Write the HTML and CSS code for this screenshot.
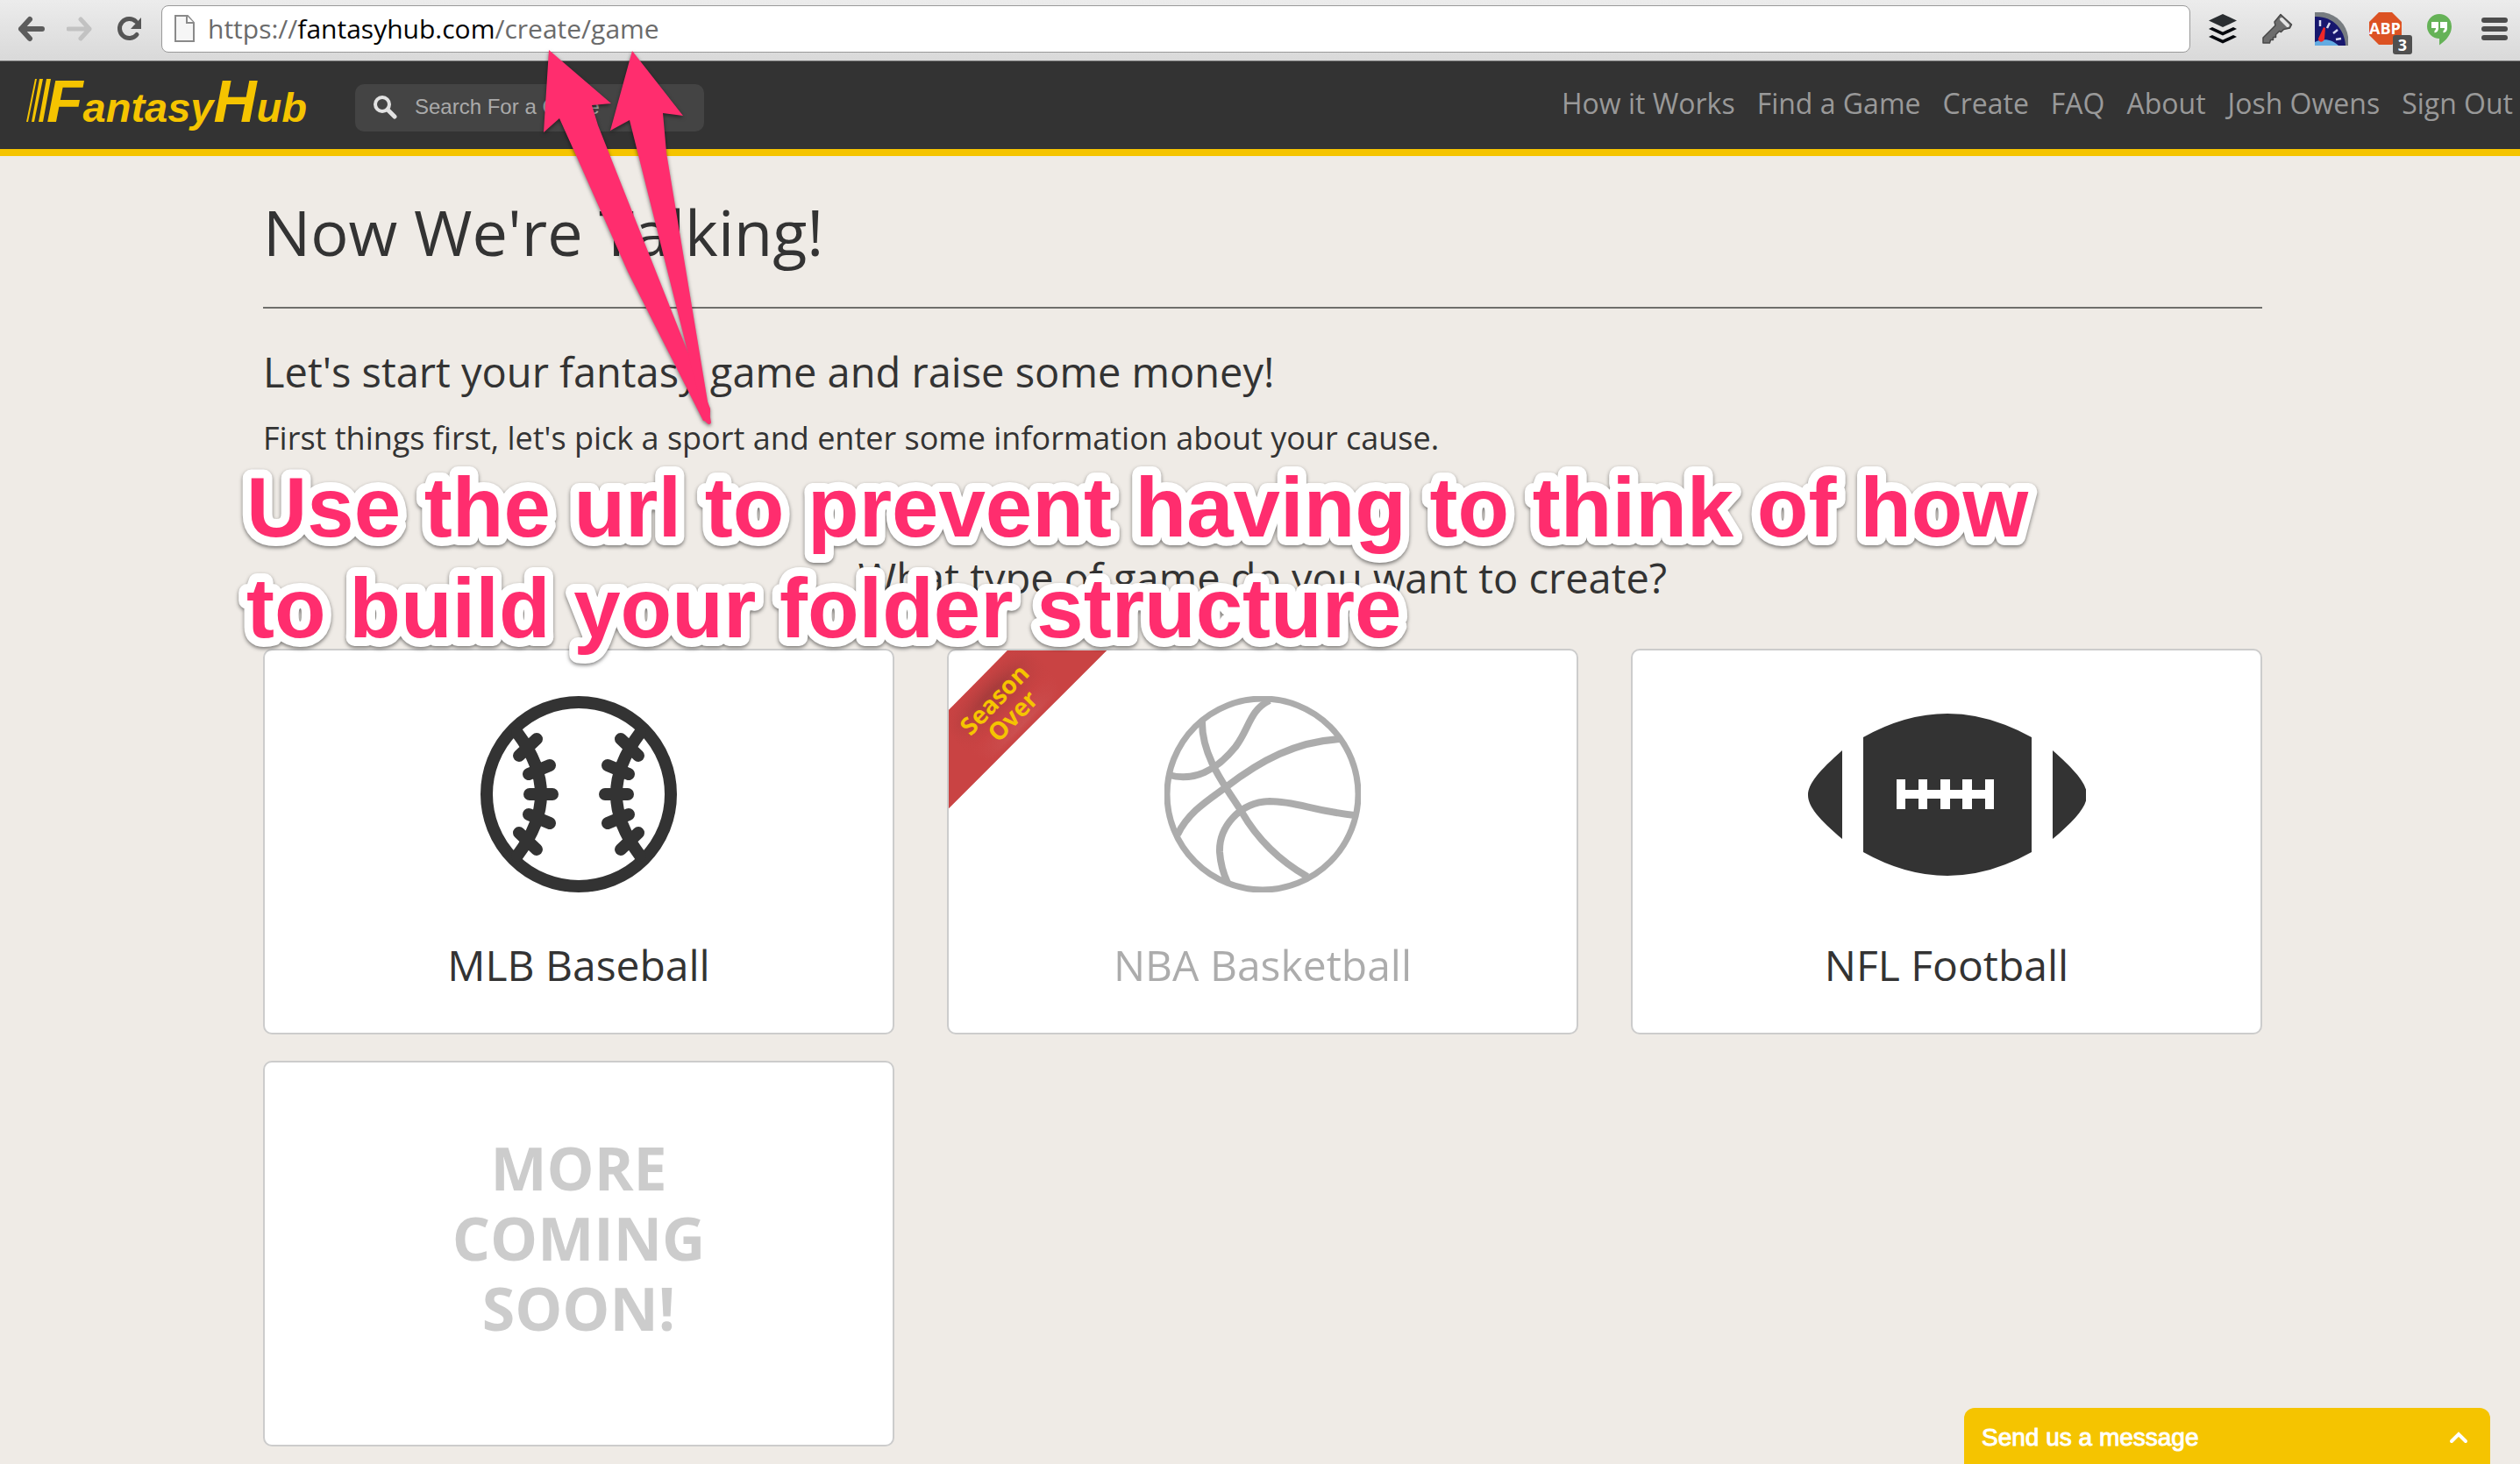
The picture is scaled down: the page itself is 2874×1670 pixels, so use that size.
FILE: index.html
```html
<!DOCTYPE html>
<html lang="en">
<head>
<meta charset="utf-8">
<title>FantasyHub</title>
<link rel="stylesheet" href="styles.css">
</head>
<body>
<div class="toolbar">
  <div class="toolbar-nav">
    <button class="tool" aria-label="Back"><svg width="32" height="32" viewBox="0 0 32 32"><path d="M28 16H4M14 5 4 16l10 11" fill="none" stroke="#5c5c5c" stroke-width="6" stroke-linecap="round" stroke-linejoin="round"/></svg></button>
    <button class="tool" aria-label="Forward"><svg width="32" height="32" viewBox="0 0 32 32"><path d="M2 16h24M16 5l10 11-10 11" fill="none" stroke="#c2c2c2" stroke-width="5" stroke-linecap="round" stroke-linejoin="round"/></svg></button>
    <button class="tool" aria-label="Reload"><svg width="32" height="32" viewBox="0 0 32 32"><path d="M24 22.500A11 11 0 1 1 23 7.500" fill="none" stroke="#555" stroke-width="5" stroke-linecap="round"/><path d="M29 3v13H17z" fill="#555"/></svg></button>
  </div>
  <div class="address">
    <svg width="24" height="32" viewBox="0 0 24 32"><path d="M1 1h14l7 8v21H1z" fill="#f6f6f6" stroke="#8a8a8a" stroke-width="2"/><path d="M14 1v8h8" fill="#fff" stroke="#8a8a8a" stroke-width="2"/></svg>
    <div class="url" role="textbox" contenteditable="true" spellcheck="false" aria-label="Address">https://<span class="url-host">fantasyhub.com</span>/create/game</div>
  </div>
  <div class="extensions">
    <button class="tool tool-ext" aria-label="Buffer"><svg width="40" height="40" viewBox="0 0 40 40"><path d="M20 3l16 7.500-16 7.500L4 10.500z" fill="#2a2e31"/><path d="M4 20l4-2 12 5.500L32 18l4 2-16 7.500zM4 29l4-2 12 5.500L32 27l4 2-16 7.500z" fill="#05080d"/></svg></button>
    <button class="tool tool-ext" aria-label="Passwords"><svg width="40" height="40" viewBox="0 0 40 40"><path d="M24 3.500l12.500 11.500-2 4-7 1.500-3 3-2-1-4 4v3h-3v3h-3l-1 3.500H4V30l14-14-1-4z" fill="#6d6d6d" stroke="#484848" stroke-width="1.500" stroke-linejoin="round"/><path d="M25 9l7 7" stroke="#e4e4e4" stroke-width="4" stroke-linecap="round"/></svg></button>
    <button class="tool tool-ext" aria-label="Page speed"><svg width="40" height="40" viewBox="0 0 40 40"><path d="M1 1h10c16 3 26 14 28 28v10H1z" fill="#777c80"/><path d="M1 6c20-1 34 14 35 33H1z" fill="#17176e"/><path d="M1 35c10-5 20-3 27 4H1z" fill="#62abe2"/><path d="M7 10v7M18 13l-3 6M27 21l-5 4M31 31l-6 1" stroke="#d8daf0" stroke-width="2.500"/><path d="M11 18l2 1-1 12c-1 5-7 5-7 0z" fill="#f02828"/></svg></button>
    <button class="tool tool-ext" aria-label="Adblock Plus, 3 blocked"><svg width="40" height="40" viewBox="0 0 40 40"><path d="M12 1h15l11 11v15L27 38H12L1 27V12z" fill="#dc5223"/><text class="abp-text" x="19" y="26" text-anchor="middle">ABP</text></svg><span class="badge">3</span></button>
    <button class="tool tool-ext" aria-label="Hangouts"><svg width="40" height="40" viewBox="0 0 40 40"><path d="M19 3a14 14 0 0 1 14 14c0 9-6 16-14 21.500V31a14 14 0 0 1 0-28z" fill="#65b257"/><path d="M10 12h8v7c0 3-1.500 5-4.500 5.500V22c1-.5 1.500-1.500 1.500-3h-5zM20 12h8v7c0 3-1.500 5-4.500 5.500V22c1-.5 1.500-1.500 1.500-3h-5z" fill="#fff"/></svg></button>
    <button class="tool tool-ext" aria-label="Menu"><svg width="40" height="40" viewBox="0 0 40 40"><path d="M8 10h24M8 20h24M8 30h24" stroke="#4c4c4c" stroke-width="6" stroke-linecap="round"/></svg></button>
  </div>
</div>

<header class="header">
  <a class="logo" href="#" aria-label="FantasyHub">
    <svg class="logo-mark" width="324" height="66" viewBox="0 0 324 66"><path d="M0 49L10 0h2L2 49zM6 49L15 0h4L9 49zM14 49L23 0h5L19 49z"/><text class="logo-text" x="23" y="49"><tspan class="logo-cap">F</tspan>antasy<tspan class="logo-cap">H</tspan>ub</text></svg>
  </a>
  <label class="search">
    <svg width="28" height="28" viewBox="0 0 28 28"><circle cx="11" cy="11" r="8" fill="none" stroke="#e2e2e2" stroke-width="4"/><path d="M17 17l8 8" stroke="#e2e2e2" stroke-width="5" stroke-linecap="round"/></svg>
    <input class="search-input" type="text" placeholder="Search For a Game" aria-label="Search For a Game">
  </label>
  <nav class="menu">
    <a href="#">How it Works</a>
    <a href="#">Find a Game</a>
    <a href="#">Create</a>
    <a href="#">FAQ</a>
    <a href="#">About</a>
    <a href="#">Josh Owens</a>
    <a href="#">Sign Out</a>
  </nav>
</header>

<main class="main">
  <h1 class="title">Now We're Talking!</h1>
  <h2 class="subtitle">Let's start your fantasy game and raise some money!</h2>
  <p class="intro">First things first, let's pick a sport and enter some information about your cause.</p>
  <h2 class="subtitle question">What type of game do you want to create?</h2>
  <div class="sports">
    <a class="card" href="#">
      <svg width="224" height="224" viewBox="0 0 224 224" fill="none" stroke="#333" stroke-width="14" stroke-linecap="round">
        <circle cx="112" cy="112" r="105"/>
        <path d="M42 42C60 66 69 88 69 112s-9 46-27 70M64 49L44 68M79 79L55 89M56 112h26M79 145l-24-10M64 175l-20-19"/>
        <path d="M182 42c-18 24-27 46-27 70s9 46 27 70M160 49l20 19M145 79l24 10M142 112h26M145 145l24-10M160 175l20-19"/>
      </svg>
      <span class="card-label">MLB Baseball</span>
    </a>
    <div class="card">
      <svg class="ribbon" width="180" height="180" viewBox="0 0 180 180">
        <defs>
          <linearGradient id="fold" gradientUnits="userSpaceOnUse" x1="34" y1="34" x2="90" y2="90"><stop offset="0" stop-color="#c94343"/><stop offset=".25" stop-color="#a93c3c"/><stop offset=".65" stop-color="#c94343"/><stop offset=".9" stop-color="#cc5555"/><stop offset="1" stop-color="#c94343"/></linearGradient>
          <radialGradient id="ends" gradientUnits="userSpaceOnUse" cx="60" cy="60" r="68"><stop offset=".3" stop-color="#c94343" stop-opacity="0"/><stop offset="1" stop-color="#c94343"/></radialGradient>
        </defs>
        <path d="M67 0h113L0 180V68z" fill="url(#fold)"/>
        <path d="M67 0h113L0 180V68z" fill="url(#ends)"/>
        <g transform="rotate(-46 70 72)"><text class="ribbon-text" x="69" y="58">Season</text><text class="ribbon-text" x="70" y="86">Over</text></g>
      </svg>
      <svg class="faded" width="224" height="224" viewBox="0 0 224 224" fill="none" stroke="#333" stroke-width="8">
        <circle cx="112" cy="112" r="109" stroke-width="7"/>
        <path d="M5 90C34 98 60 84 81 58 97 37 97 16 120 5M43 28C42 70 72 106 88 132c19 33 47 58 75 74M15 158C27 133 48 120 70 104c40-31 80-52 130-55M217 136c-47-5-67-16-97-16-35 1-58 30-57 58 1 14 4 24 9 35"/>
      </svg>
      <span class="card-label faded">NBA Basketball</span>
    </div>
    <a class="card" href="#">
      <svg width="318" height="224" viewBox="-1 -20 318 224" fill="#333">
        <path d="M39 42C13 65 0 80 0 93s13 28 39 50zM63 27q96-54 192 0v131q-96 54-192 0zM279 42c26 23 39 38 39 51s-13 28-39 50z"/>
        <path d="M101 75h10v12h15V75h10v12h15V75h11v12h14V75h11v12h15V75h10v34h-10V97h-15v12h-11V97h-14v12h-11V97h-15v12h-10V97h-15v12h-10z" fill="#fff"/>
      </svg>
      <span class="card-label">NFL Football</span>
    </a>
    <div class="card card-soon">MORE<br>COMING<br>SOON!</div>
  </div>
</main>

<button class="chat">Send us a message
  <svg width="22" height="16" viewBox="0 0 22 16"><path d="M3 12l8-8 8 8" fill="none" stroke="#fff" stroke-width="4" stroke-linecap="round"/></svg>
</button>

<svg class="overlay arrows" width="240" height="440" viewBox="600 40 240 440">
  <path d="M626 57l71 61-22 2 7 23L810 466q1 17-8 14L716 310 656 175 638 135l-18 16z"/>
  <path d="M721 58l58 74-23-3 4 45 51 308q-2 5-7-2L718 137l-22 12z"/>
</svg>
<svg class="overlay annotation" width="2060" height="240" viewBox="0 0 2060 240">
  <text x="11" y="92">Use the url to prevent having to think of how</text>
  <text x="11" y="207">to build your folder structure</text>
</svg>
</body>
</html>
```
FILE: styles.css
```css
* { box-sizing: border-box; }

body {
  position: relative;
  margin: 0;
  min-height: 100vh;
  background: #efebe6;
  color: #333;
  font-family: "Open Sans", "Noto Sans", sans-serif;
}

h1, h2, p { margin: 0; font-weight: 400; }
a { color: inherit; text-decoration: none; }
button { padding: 0; border: 0; background: none; font: inherit; cursor: pointer; }
svg { display: block; flex: none; }

/* Browser toolbar */
.toolbar {
  display: flex;
  padding: 6px 9px 9px 20px;
  border-bottom: 1px solid #777;
  background: linear-gradient(#ececec, #d9d9d9);
}
.toolbar-nav { display: flex; gap: 24px; margin-right: 20px; }
.tool { display: flex; align-items: center; }
.address {
  display: flex;
  flex: 1;
  align-items: center;
  gap: 14px;
  height: 54px;
  padding: 0 14px;
  border: 1px solid #999;
  border-radius: 8px;
  background: #fff;
}
.url {
  flex: 1;
  outline: 0;
  color: #6b6b6b;
  font-size: 30px;
  line-height: 42px;
  white-space: nowrap;
}
.url-host { color: #000; }
.extensions { display: flex; gap: 22px; margin-left: 17px; }
.tool-ext { position: relative; }
.abp-text { fill: #fff; font: 700 18px "Open Sans", sans-serif; }
.badge {
  position: absolute;
  right: -10px;
  bottom: -2px;
  width: 22px;
  height: 22px;
  border-radius: 3px;
  background: #505050;
  color: #fff;
  font-size: 18px;
  font-weight: 700;
  line-height: 22px;
}

/* Site header */
.header {
  display: flex;
  align-items: flex-start;
  padding: 20px 8px 14px 30px;
  border-bottom: 8px solid #f5c400;
  background: #333;
}
.logo { fill: #f5c400; }
.logo-mark { overflow: visible; }
.logo-text { font: italic 700 47px "Liberation Sans", Arial, sans-serif; }
.logo-cap { font-size: 68px; }
.search {
  display: flex;
  align-items: center;
  gap: 20px;
  width: 398px;
  height: 54px;
  margin: 6px 0 0 51px;
  padding: 0 20px 2px;
  border-radius: 10px;
  background: #444;
}
.search-input {
  flex: 1;
  min-width: 0;
  padding: 0;
  border: 0;
  outline: 0;
  background: none;
  color: #fff;
  font: 24px "Liberation Sans", Arial, sans-serif;
}
.search-input::placeholder { color: #aaa; opacity: 1; }
.menu {
  display: flex;
  gap: 25px;
  margin-left: auto;
  color: #999;
  font-size: 32px;
  line-height: 56px;
  white-space: nowrap;
}

/* Page content */
.main { padding: 36px 294px 20px 300px; }
.title {
  padding-bottom: 36px;
  border-bottom: 2px solid #6f6e6b;
  font-size: 72px;
  line-height: 100px;
}
.subtitle { margin-top: 39px; font-size: 47px; line-height: 66px; }
.intro { margin-top: 18px; font-size: 36px; line-height: 50px; }
.question { margin: 101px 0 48px; text-align: center; }
.sports {
  display: grid;
  grid-template-columns: repeat(3, 1fr);
  gap: 30px 60px;
}
.card {
  position: relative;
  display: flex;
  flex-direction: column;
  align-items: center;
  padding: 52px 0 44px;
  border: 2px solid #ccc;
  border-radius: 10px;
  background: #fff;
}
.card-label { margin-top: 50px; font-size: 48px; line-height: 66px; }
.faded { opacity: .4; }
.ribbon { position: absolute; top: 0; left: 0; }
.ribbon-text {
  fill: #f5c400;
  font: 700 28px "Open Sans", sans-serif;
  text-anchor: middle;
}
.card-soon {
  display: block;
  padding: 80px 0 116px;
  color: #ccc;
  font-size: 68px;
  font-weight: 700;
  line-height: 80px;
  text-align: center;
}

/* Chat tab */
.chat {
  position: fixed;
  right: 34px;
  bottom: 0;
  display: flex;
  align-items: center;
  justify-content: space-between;
  width: 600px;
  height: 64px;
  padding: 4px 25px 0 20px;
  border-radius: 12px 12px 0 0;
  background: #f5c400;
  color: #fff;
  font: 28px "Liberation Sans", Arial, sans-serif;
  -webkit-text-stroke: 1px #fff;
}

/* Arrows and caption drawn over the page */
.overlay {
  position: absolute;
  overflow: visible;
  fill: #ff2d6e;
  filter: drop-shadow(0 2px 2px rgba(0, 0, 0, .5));
  pointer-events: none;
}
.arrows { top: 40px; left: 600px; }
.annotation {
  top: 520px;
  left: 270px;
  stroke: #fff;
  stroke-width: 20px;
  stroke-linejoin: round;
  paint-order: stroke fill;
  font: 700 96px "Liberation Sans", Arial, sans-serif;
}
```
